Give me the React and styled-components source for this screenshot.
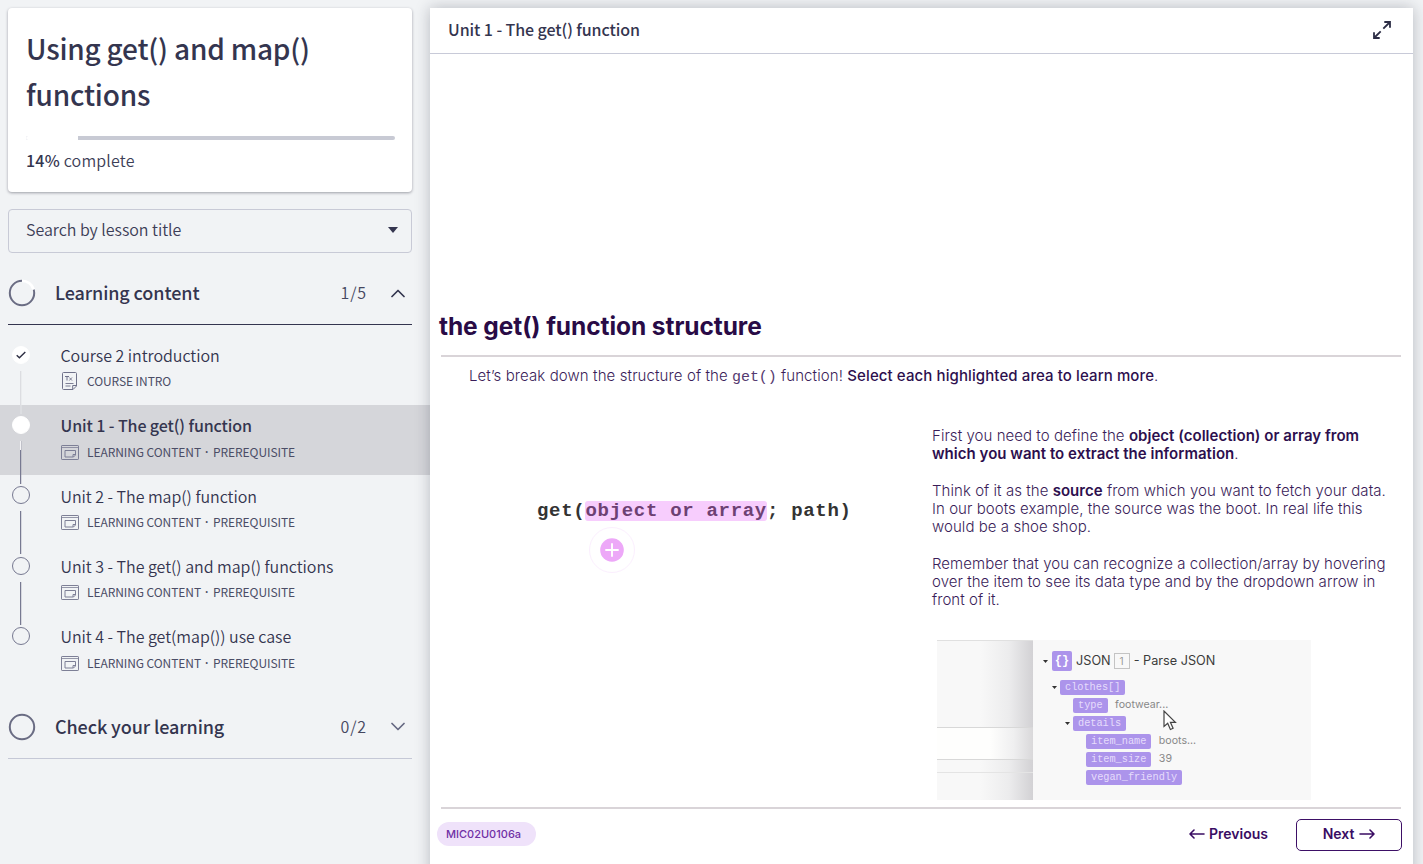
import React from "react";
import styled, { createGlobalStyle } from "styled-components";

const Global = createGlobalStyle`
  *, *::before, *::after { box-sizing: border-box; }
  html, body { margin: 0; background: #f1f3f5; }
  body { height: 864px; overflow: hidden; }
  h1, h2, p { margin: 0; font-weight: inherit; }
  button { font: inherit; color: inherit; background: none; border: 0; padding: 0; }
  svg { display: block; flex: none; }
`;

const Page = styled.div`
  display: flex;
  width: 1423px;
  height: 864px;
  overflow: hidden;
  background: #f1f3f5;
  color: #34354f;
  font-family: "Noto Sans CJK SC", "Noto Sans", sans-serif;
`;

/* Sidebar */
const Sidebar = styled.aside`
  flex: none;
  width: 430px;
  padding-top: 8px;
`;

const CourseCard = styled.section`
  width: 404px;
  height: 184px;
  margin-left: 8px;
  padding: 17px 17px 0 18px;
  border-radius: 4px;
  background: #fff;
  box-shadow: 0 1px 3px rgba(30, 32, 50, 0.4);
`;

const CourseTitle = styled.h1`
  font-size: 28px;
  line-height: 46px;
  font-weight: 500;
  letter-spacing: -0.2px;
`;

const ProgressTrack = styled.div`
  height: 4px;
  margin-top: 19px;
  border-radius: 2px;
  background: #c8cad4;
  overflow: hidden;
`;

const ProgressFill = styled.div`
  height: 100%;
  background: #fff;
`;

const ProgressLabel = styled.p`
  margin-top: 8px;
  font-size: 16px;
  line-height: 24px;
  letter-spacing: 0.2px;
  font-weight: 350;
  color: #3d3e57;
  b { font-weight: 500; color: #34354f; }
`;

const SearchBox = styled.button`
  display: flex;
  align-items: center;
  justify-content: space-between;
  width: 404px;
  height: 44px;
  margin: 17px 0 0 8px;
  padding: 0 13px 2px 17px;
  border: 1px solid #c8cad6;
  border-radius: 4px;
  font-size: 16px;
  line-height: 24px;
  font-weight: 350;
  letter-spacing: -0.03px;
  color: #3d3e57;
`;

const SearchText = styled.span`
  padding-bottom: 2px;
`;

const SectionHeader = styled.div`
  display: flex;
  align-items: center;
  width: 404px;
  height: 63px;
  margin: ${(p) => p.$top}px 0 0 8px;
  padding-right: 7px;
  border-bottom: 1px solid ${(p) => (p.$open ? "#34354f" : "#c5c8d6")};
`;

const SectionTitle = styled.h2`
  flex: 1;
  margin-left: 19px;
  padding-bottom: 2px;
  font-size: 18px;
  line-height: 28px;
  font-weight: 500;
  letter-spacing: -0.1px;
`;

const SectionCount = styled.span`
  margin-right: 24px;
  padding-bottom: 2px;
  font-size: 16px;
  line-height: 24px;
  letter-spacing: 0.9px;
  font-weight: 350;
  color: #45475f;
`;

const LessonList = styled.div`
  padding-top: 9.6px;
`;

const LessonRow = styled.div`
  display: flex;
  height: 70.4px;
  background: ${(p) => (p.$active ? "#d5d6da" : "transparent")};
`;

const Rail = styled.div`
  position: relative;
  z-index: 1;
  flex: none;
  display: flex;
  flex-direction: column;
  align-items: center;
  gap: 7px;
  width: 41px;
  padding-top: 11px;
`;

const Bullet = styled.span`
  flex: none;
  display: flex;
  align-items: center;
  justify-content: center;
  width: 18px;
  height: 18px;
  border-radius: 50%;
  background: ${(p) => (p.$filled ? "#fff" : "transparent")};
  border: 1px solid ${(p) => (p.$filled ? "#fff" : "#777991")};
`;

const RailLine = styled.span`
  flex: none;
  width: 1px;
  height: 43px;
  background: ${(p) =>
    p.$done ? "#dcdde1" : p.$current ? "linear-gradient(#f4f4f6 9px, #777991 9px)" : "#777991"};
  box-shadow: 0.5px 0 0 ${(p) => (p.$done ? "#e4e5e8" : "rgba(119,121,145,.45)")};
`;

const LessonText = styled.div`
  padding: 8.3px 0 0 19.5px;
`;

const LessonName = styled.p`
  font-size: 16px;
  line-height: 24px;
  letter-spacing: ${(p) => (p.$active ? -0.1 : -0.03)}px;
  font-weight: ${(p) => (p.$active ? 500 : 350)};
`;

const LessonMeta = styled.p`
  display: flex;
  align-items: center;
  gap: 8.5px;
  margin-top: 3.3px;
  font-size: 12px;
  line-height: 22px;
  letter-spacing: -0.08px;
  color: #4b4d66;
`;

const Dot = styled.span`
  font-family: "Noto Sans", sans-serif;
  font-weight: 600;
  letter-spacing: 0.8px;
  white-space: pre;
`;

/* Lesson viewer */
const Viewer = styled.main`
  display: flex;
  flex-direction: column;
  width: 983px;
  height: 870px;
  margin-top: 8px;
  background: #fff;
  box-shadow: 0 0 14px rgba(30, 32, 50, 0.27);
`;

const ViewerBar = styled.header`
  flex: none;
  display: flex;
  align-items: center;
  justify-content: space-between;
  height: 46px;
  padding: 0 22px 2px 18px;
  border-bottom: 1px solid #c8cad8;
`;

const ViewerTitle = styled.h2`
  padding-bottom: 2px;
  font-size: 16px;
  line-height: 24px;
  font-weight: 500;
  letter-spacing: -0.08px;
`;

const Slide = styled.article`
  display: flex;
  flex-direction: column;
  padding: 257px 12px 0 11px;
  color: #3a1d59;
  font-family: Inter, sans-serif;
`;

const SlideTitle = styled.h2`
  height: 44px;
  margin-left: -2px;
  font-size: 24.5px;
  line-height: 30px;
  font-weight: 700;
  letter-spacing: -0.08px;
  color: #290b46;
`;

const Rule = styled.div`
  height: 2px;
  background: #d9d4d8;
`;

const Intro = styled.p`
  height: 70px;
  padding: 9px 0 0 28px;
  font-size: 15px;
  line-height: 20px;
  font-weight: 300;
  letter-spacing: 0.1px;
  white-space: nowrap;
  b { font-weight: 500; color: #2d0f4e; }
  code { font: 15px "Liberation Mono", monospace; letter-spacing: -0.1px; color: #553a70; }
`;

const Columns = styled.div`
  display: flex;
  height: 380px;
`;

const Formula = styled.div`
  width: 491px;
  padding: 73px 0 0 96px;
  font: 700 19px/22px "Liberation Mono", monospace;
  letter-spacing: 0.7px;
  color: #333;
  white-space: nowrap;
`;

const Highlight = styled.mark`
  display: inline-block;
  height: 20px;
  line-height: 20px;
  border-radius: 3px;
  background: #f7cdfd;
  color: #6d4173;
`;

const Hotspot = styled.div`
  display: flex;
  align-items: center;
  justify-content: center;
  width: 46px;
  height: 46px;
  margin: 5px 0 0 52px;
  border: 1px solid #fbeffe;
  border-radius: 50%;
`;

const Explanation = styled.div`
  font-size: 15px;
  line-height: 18.25px;
  font-weight: 300;
  letter-spacing: 0.05px;
  white-space: nowrap;
  b { font-weight: 600; letter-spacing: 0.03px; color: #2d0f4e; }
  p { margin-bottom: 18.25px; }
`;

const Shot = styled.div`
  position: relative;
  display: flex;
  width: 374px;
  height: 160px;
  margin: 30px 0 0 5px;
  background: #f8f8f8;
  letter-spacing: 0;
`;

const ShotPane = styled.div`
  width: 96px;
  padding-top: 86px;
  border-top: 1px solid #e0e0e0;
  background: linear-gradient(90deg, #f8f8f8 45%, #ececed 75%, #d2d1d4 100%);
`;

const ShotField = styled.div`
  height: 33px;
  border: solid #d8d8d8;
  border-width: 1px 0;
  background: linear-gradient(90deg, #fefefd 55%, #efeff0 80%, #d9d8da 100%);
`;

const ShotSeparator = styled.div`
  height: 13px;
  border-bottom: 1px solid #e4e4e4;
`;

const Tree = styled.div`
  padding: 10px 0 0 10px;
  white-space: nowrap;
`;

const TreeHead = styled.div`
  display: flex;
  align-items: center;
  height: 23px;
  margin-bottom: 6px;
  font-size: 12.7px;
  font-weight: 400;
  color: #3c3c3c;
`;

const ModuleIcon = styled.span`
  display: flex;
  align-items: center;
  justify-content: center;
  width: 20px;
  height: 20px;
  margin: 0 4px 0 4px;
  border-radius: 2px;
  background: #ac94eb;
  color: #fff;
  font: 700 12px "Liberation Mono", monospace;
`;

const ModuleNumber = styled.span`
  width: 16px;
  height: 16px;
  margin: 0 4px 0 3px;
  border: 1px solid #c4c4c4;
  font-size: 10px;
  line-height: 14px;
  text-align: center;
  color: #999;
`;

const TreeRow = styled.div`
  display: flex;
  align-items: center;
  height: 18px;
  padding-left: ${(p) => p.$indent}px;
  font-size: 10.6px;
  font-weight: 400;
  color: #888;
`;

const Tag = styled.span`
  height: 15px;
  margin: 0 7.5px 0 3px;
  padding: 0 5px;
  border-radius: 2px;
  background: #ac94eb;
  color: #e6dcfb;
  font: 10.25px/15px "Liberation Mono", monospace;
`;

const Pointer = styled.svg`
  position: absolute;
  left: 226px;
  top: 70px;
`;

const SlideFooter = styled.footer`
  display: flex;
  align-items: center;
  height: 51px;
  margin: 0 -1px 0 -4px;
`;

const Code = styled.span`
  height: 24px;
  width: 99px;
  padding-left: 9px;
  border-radius: 12px;
  background: #efe2fa;
  color: #7030a5;
  font-size: 11px;
  line-height: 24px;
  font-weight: 500;
  margin: 0 auto 2px 0;
`;

const NavButton = styled.button`
  display: flex;
  align-items: center;
  justify-content: center;
  gap: ${(p) => (p.$outlined ? 5 : 4)}px;
  width: ${(p) => (p.$outlined ? "106px" : "auto")};
  height: 32px;
  padding-bottom: 2px;
  margin-left: ${(p) => (p.$outlined ? 28 : 0)}px;
  border: ${(p) => (p.$outlined ? "1.5px solid #3d0f66" : "0")};
  border-radius: 5px;
  font-size: 14px;
  font-weight: 600;
  color: #3a0c63;
`;

const Chevron = ({ up }) => (
  <svg width="14" height="9" viewBox="0 0 14 9" fill="none" stroke={up ? "#34354f" : "#666882"} strokeWidth="1.7" strokeLinecap="round" strokeLinejoin="round">
    <path d={up ? "M1 7.5 7 1.5 13 7.5" : "M1 1.5 7 7.5 13 1.5"} />
  </svg>
);

const Ring = ({ progress }) => (
  <svg width="28" height="28" viewBox="0 0 28 28" fill="none">
    <circle cx="14" cy="14" r="12.2" stroke="#6a6c83" strokeWidth="2" />
    {progress && (
      <>
        <path d="M14 1.3a12.7 12.7 0 0 1 12.2 9" stroke="#f1f3f5" strokeWidth="4" />
        <path d="M14 1.8a12.2 12.2 0 0 1 11.6 8.5" stroke="#fff" strokeWidth="2.8" />
      </>
    )}
  </svg>
);

const CheckMark = () => (
  <svg width="10" height="8" viewBox="0 0 10 8" fill="none" stroke="#2c2d42" strokeWidth="1.4">
    <path d="M.7 4.2 3.4 6.7 9.3 1" />
  </svg>
);

const WindowIcon = () => (
  <svg width="18" height="15" viewBox="0 0 18 15" fill="none" stroke="#7d7f96">
    <rect x=".5" y=".5" width="17" height="14" rx=".6" />
    <path d="M.5 2.5h17" strokeWidth=".8" />
    <path d="M4 5.5h10.5v4.5l-2 2H4z M14.500 9.500h-2.500V12" />
  </svg>
);

const DocIcon = () => (
  <svg width="18" height="18" viewBox="0 0 18 18" fill="none" stroke="#70728a">
    <path d="M2.500 .5h12c.6 0 1 .4 1 1V14l-3.500 3.500h-9.500c-.6 0-1-.4-1-1V1.500c0-.6.4-1 1-1z M15.500 13.500h-3.800v4" />
    <path d="M4 4.500h4M6 4.500v4" />
    <path d="M8.300 5.500l2.700 3M11 5.500l-2.700 3M4.500 11.500h8M4.500 14h5" strokeWidth=".9" />
  </svg>
);

const ExpandIcon = () => (
  <svg width="18" height="18" viewBox="0 0 18 18" fill="none" stroke="#2c2d45" strokeWidth="1.8">
    <path d="M10.300 7.700 16.500 1.500M11.300 1h5.700v5.700M7.700 10.300 1.500 16.500M1 11.300v5.700h5.700" />
  </svg>
);

const PlusDot = () => (
  <svg width="24" height="24" viewBox="0 0 24 24">
    <circle cx="12" cy="12" r="11.8" fill="#eda8f8" />
    <path d="M12 6v12M6 12h12" stroke="#fff" strokeWidth="1.9" strokeLinecap="round" />
  </svg>
);

const Arrow = ({ left }) => (
  <svg width="16" height="12" viewBox="0 0 16 12" fill="none" stroke="#3a0c63" strokeWidth="1.6" strokeLinecap="round" strokeLinejoin="round">
    <path d={left ? "M15 6H1M5 2 1 6l4 4" : "M1 6h14M11 2 15 6l-4 4"} />
  </svg>
);

const Caret = ({ width = 5, color = "#333" }) => (
  <svg width={width} height={width * 0.6} viewBox="0 0 10 6" fill={color}>
    <path d="M0 0h10L5 6z" />
  </svg>
);

const lessons = [
  { name: "Course 2 introduction", kind: "COURSE INTRO", done: true, doc: true },
  { name: "Unit 1 - The get() function", kind: "LEARNING CONTENT", required: true, active: true },
  { name: "Unit 2 - The map() function", kind: "LEARNING CONTENT", required: true },
  { name: "Unit 3 - The get() and map() functions", kind: "LEARNING CONTENT", required: true },
  { name: "Unit 4 - The get(map()) use case", kind: "LEARNING CONTENT", required: true },
];

const treeRows = [
  { tag: "clothes[]", indent: 9, open: true },
  { tag: "type", indent: 27, value: "footwear..." },
  { tag: "details", indent: 22, open: true },
  { tag: "item_name", indent: 40, value: "boots..." },
  { tag: "item_size", indent: 40, value: "39" },
  { tag: "vegan_friendly", indent: 40 },
];

export default function App() {
  return (
    <>
      <Global />
      <Page>
        <Sidebar>
          <CourseCard>
            <CourseTitle>Using get() and map()<br />functions</CourseTitle>
            <ProgressTrack><ProgressFill style={{ width: "14%" }} /></ProgressTrack>
            <ProgressLabel><b>14%</b> complete</ProgressLabel>
          </CourseCard>
          <SearchBox>
            <SearchText>Search by lesson title</SearchText>
            <Caret width={10} color="#34354f" />
          </SearchBox>
          <SectionHeader $open $top={9}>
            <Ring progress />
            <SectionTitle>Learning content</SectionTitle>
            <SectionCount>1/5</SectionCount>
            <Chevron up />
          </SectionHeader>
          <LessonList>
            {lessons.map((l, i) => (
              <LessonRow key={l.name} $active={l.active}>
                <Rail>
                  <Bullet $filled={l.done || l.active}>{l.done && <CheckMark />}</Bullet>
                  {i < lessons.length - 1 && <RailLine $done={l.done} $current={l.active} />}
                </Rail>
                <LessonText>
                  <LessonName $active={l.active}>{l.name}</LessonName>
                  <LessonMeta>
                    {l.doc ? <DocIcon /> : <WindowIcon />}
                    <span>
                      {l.kind}
                      {l.required && <><Dot> · </Dot>PREREQUISITE</>}
                    </span>
                  </LessonMeta>
                </LessonText>
              </LessonRow>
            ))}
          </LessonList>
          <SectionHeader $top={9}>
            <Ring />
            <SectionTitle>Check your learning</SectionTitle>
            <SectionCount>0/2</SectionCount>
            <Chevron />
          </SectionHeader>
        </Sidebar>

        <Viewer>
          <ViewerBar>
            <ViewerTitle>Unit 1 - The get() function</ViewerTitle>
            <ExpandIcon />
          </ViewerBar>
          <Slide>
            <SlideTitle>the get() function structure</SlideTitle>
            <Rule />
            <Intro>
              Let’s break down the structure of the <code>get()</code> function! <b>Select each highlighted area to learn more</b>.
            </Intro>
            <Columns>
              <Formula>
                get(<Highlight>object or array</Highlight>; path)
                <Hotspot><PlusDot /></Hotspot>
              </Formula>
              <Explanation>
                <p>
                  First you need to define the <b>object (collection) or array from<br />
                  which you want to extract the information</b>.
                </p>
                <p>
                  Think of it as the <b>source</b> from which you want to fetch your data.<br />
                  In our boots example, the source was the boot. In real life this<br />
                  would be a shoe shop.
                </p>
                <p>
                  Remember that you can recognize a collection/array by hovering<br />
                  over the item to see its data type and by the dropdown arrow in<br />
                  front of it.
                </p>
                <Shot>
                  <ShotPane>
                    <ShotField />
                    <ShotSeparator />
                  </ShotPane>
                  <Tree>
                    <TreeHead>
                      <Caret />
                      <ModuleIcon>{"{}"}</ModuleIcon>
                      JSON
                      <ModuleNumber>1</ModuleNumber>
                      - Parse JSON
                    </TreeHead>
                    {treeRows.map((r) => (
                      <TreeRow key={r.tag} $indent={r.indent}>
                        {r.open && <Caret />}
                        <Tag>{r.tag}</Tag>
                        {r.value}
                      </TreeRow>
                    ))}
                  </Tree>
                  <Pointer width="14" height="21" viewBox="0 0 14 21" fill="#fff" stroke="#444" strokeWidth="1.2">
                    <path d="M1 1v15.500l3.700-3.300 2.700 6.300 2.700-1.200-2.700-6h5z" />
                  </Pointer>
                </Shot>
              </Explanation>
            </Columns>
            <Rule />
            <SlideFooter>
              <Code>MIC02U0106a</Code>
              <NavButton><Arrow left />Previous</NavButton>
              <NavButton $outlined>Next<Arrow /></NavButton>
            </SlideFooter>
          </Slide>
        </Viewer>
      </Page>
    </>
  );
}
